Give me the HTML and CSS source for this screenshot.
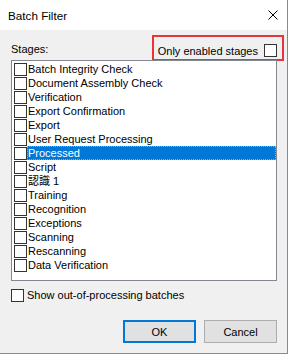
FILE: index.html
```html
<!DOCTYPE html>
<html lang="en">
<head>
    <meta charset="UTF-8">
    <title>Batch Filter</title>
    <link rel="stylesheet" href="styles.css">
</head>
<body>
    <div class="dialog">
        <div class="titlebar">
            <span class="title">Batch Filter</span>
            <svg class="close" viewBox="0 0 10 10">
                <path d="M0.5 0.5L9.5 9.5M9.5 0.5L0.5 9.5"/>
            </svg>
        </div>
        <div class="dialog-body">
            <div class="stages-head">
                <span class="stages-label">Stages:</span>
                <label class="only-enabled">
                    <span>Only enabled stages</span>
                    <span class="box"></span>
                </label>
            </div>
            <ul class="stage-list">
                <li class="stage-item"><span class="box"></span><span class="stage-name">Batch Integrity Check</span></li>
                <li class="stage-item"><span class="box"></span><span class="stage-name">Document Assembly Check</span></li>
                <li class="stage-item"><span class="box"></span><span class="stage-name">Verification</span></li>
                <li class="stage-item"><span class="box"></span><span class="stage-name">Export Confirmation</span></li>
                <li class="stage-item"><span class="box"></span><span class="stage-name">Export</span></li>
                <li class="stage-item"><span class="box"></span><span class="stage-name">User Request Processing</span></li>
                <li class="stage-item selected"><span class="box"></span><span class="stage-name">Processed</span></li>
                <li class="stage-item"><span class="box"></span><span class="stage-name">Script</span></li>
                <li class="stage-item"><span class="box"></span><span class="stage-name">認識 1</span></li>
                <li class="stage-item"><span class="box"></span><span class="stage-name">Training</span></li>
                <li class="stage-item"><span class="box"></span><span class="stage-name">Recognition</span></li>
                <li class="stage-item"><span class="box"></span><span class="stage-name">Exceptions</span></li>
                <li class="stage-item"><span class="box"></span><span class="stage-name">Scanning</span></li>
                <li class="stage-item"><span class="box"></span><span class="stage-name">Rescanning</span></li>
                <li class="stage-item"><span class="box"></span><span class="stage-name">Data Verification</span></li>
            </ul>
            <label class="show-out">
                <span class="box"></span>
                <span>Show out-of-processing batches</span>
            </label>
            <div class="buttons">
                <button class="btn btn-default">OK</button>
                <button class="btn">Cancel</button>
            </div>
        </div>
    </div>
</body>
</html>
```

FILE: styles.css
```css
* {
    margin: 0;
    padding: 0;
    box-sizing: border-box;
}

body {
    font-family: 'Liberation Sans', Arial, 'Noto Sans CJK JP', sans-serif;
    font-size: 11px;
    color: #000;
    background: #fff;
}

.dialog {
    width: 288px;
    height: 354px;
    display: flex;
    flex-direction: column;
    background: #f0f0f0;
    border-right: 1px solid #8a8a8a;
    border-bottom: 1px solid #8a8a8a;
}

.titlebar {
    height: 30px;
    background: #fff;
    display: flex;
    align-items: center;
    justify-content: space-between;
    padding: 0 9px 0 8px;
}

.title {
    font-size: 11.7px;
}

.close {
    width: 10px;
    height: 10px;
    stroke: #000;
    stroke-width: 1;
    fill: none;
}

.dialog-body {
    flex: 1;
    display: flex;
    flex-direction: column;
    padding: 0 10px 10px 11px;
}

/* header row: label + annotated checkbox */
.stages-head {
    height: 30px;
    display: flex;
    justify-content: space-between;
    align-items: flex-start;
}

.stages-label {
    margin-top: 12px;
    line-height: 14px;
}

.only-enabled {
    margin-top: 7px;
    margin-right: -5px;
    height: 22px;
    padding: 5px 5px 0 4px;
    display: flex;
    align-items: center;
    gap: 6px;
    line-height: 14px;
    outline: 2px solid #e8353b;
}

.box {
    width: 13px;
    height: 13px;
    flex-shrink: 0;
    background: #fff;
    border: 1px solid #333;
}

.stage-list {
    list-style: none;
    height: 221px;
    background: #fff;
    border: 1px solid #828790;
    padding: 1px 0 0 2px;
}

.stage-item {
    height: 14px;
    display: flex;
    align-items: flex-start;
}

.stage-item .box {
    margin-top: 1px;
}

.stage-name {
    flex: 1;
    height: 14px;
    line-height: 15px;
    padding-left: 1px;
    white-space: nowrap;
}

.stage-item.selected .stage-name {
    background: #0078d7;
    color: #fff;
    outline: 1px dotted #f0962e;
    outline-offset: -1px;
}

.show-out {
    margin-top: 7px;
    display: flex;
    align-items: center;
    gap: 3px;
    line-height: 14px;
}

.buttons {
    margin-top: auto;
    display: flex;
    justify-content: flex-end;
    gap: 8px;
}

.btn {
    width: 73px;
    height: 23px;
    font-family: inherit;
    font-size: 11px;
    color: #000;
    background: #e1e1e1;
    border: 1px solid #adadad;
}

.btn-default {
    border: 2px solid #0078d7;
}
```
